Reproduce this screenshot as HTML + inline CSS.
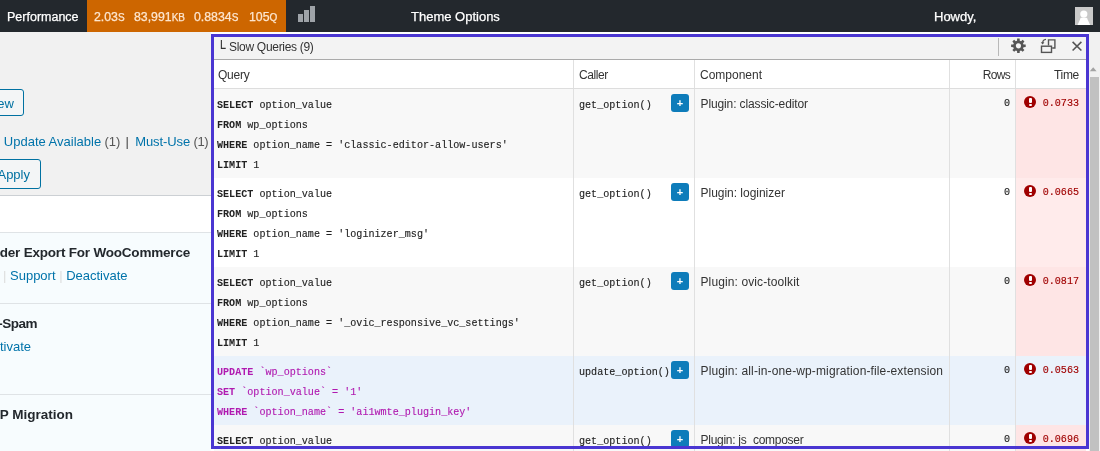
<!DOCTYPE html>
<html><head><meta charset="utf-8"><title>Query Monitor</title>
<style>
*{box-sizing:border-box;margin:0;padding:0}
html,body{width:1100px;height:451px;overflow:hidden;background:#f1f1f1;font-family:"Liberation Sans",sans-serif;}
body{position:relative}
.abs{position:absolute}
#bar{left:0;top:0;width:1100px;height:32px;background:#23282d;color:#fff;font-size:13px}
#bar span{position:absolute;top:1px;line-height:32px;white-space:nowrap;-webkit-text-stroke:0.25px}
#qm{left:87px;top:0;width:199px;height:32px;background:#cd6600}
#qm span{color:#fde6cf;font-size:12.3px}
small{font-size:10px;text-transform:uppercase}
/* left page */
.lnk{color:#0073aa}
.btn{position:absolute;border:1px solid #0071a1;background:#f3f5f6;color:#0071a1;border-radius:3px;font-size:13px}
#tbl{left:-10px;top:195px;width:230px;height:270px;background:#fff;border:1px solid #ccd0d4}
.prow{position:absolute;left:0;width:230px;background:#f7fcfe;border-top:1px solid #dfe3e6}
.ptitle{position:absolute;font-weight:bold;font-size:13.5px;letter-spacing:-0.2px;color:#23282d;white-space:nowrap}
.pact{position:absolute;font-size:13px;color:#0073aa;white-space:nowrap}
/* panel */
#panel{left:211px;top:32px;width:878px;height:419px;background:#fff}
#hl{left:211px;top:34px;width:878px;height:415px;border:3px solid #4a36d2;z-index:10}
#title{left:214px;top:37px;width:872px;height:23px;background:#f3f3f3;border-bottom:1px solid #aaa}
#title .t{position:absolute;left:15px;top:-1px;line-height:22px;font-size:12px;letter-spacing:-0.3px;color:#333}
#thead{left:214px;top:60px;width:872px;height:29px;background:#fff;border-bottom:1px solid #ddd;font-size:12px;color:#333}
#thead span{position:absolute;top:1px;line-height:29px}
.row{position:absolute;left:214px;width:872px}
.odd{background:#f8f8f8}.even{background:#fff}
.cell{position:absolute;top:0;height:100%;border-left:1px solid #e0e0e0}
.mono{font-family:"Liberation Mono",monospace;font-size:10.1px;color:#222;white-space:pre;-webkit-text-stroke:0.12px}
.q{position:absolute;left:3px;top:7px;line-height:20px}
.q b{font-weight:bold;-webkit-text-stroke:0}
.txt{position:absolute;top:5px;line-height:20px;white-space:nowrap}
.plus{position:absolute;left:97px;top:5px;width:18px;height:18px;background:#0e7cba;border-radius:3px}
.plus{color:#fff;font:bold 11px/18px "Liberation Sans",sans-serif;text-align:center;font-style:normal}
.comp{font-size:12px;color:#333}
.time{background:#fee5e5}
.even .time{background:#ffebeb}
.warn{position:absolute;left:8px;top:6.5px;width:12px;height:12px;border-radius:50%;background:#a00000}
.warn:before{content:"";position:absolute;left:4.5px;top:2.2px;width:3px;height:5px;background:#fff;border-radius:1px}
.warn:after{content:"";position:absolute;left:4.5px;top:8px;width:3px;height:2px;background:#fff;border-radius:1px}
.tv{color:#a00000}
.upd{background:#eaf2fb}.upd .time{background:#eaf2fb}
.upd .q{color:#b01ab0}
#sb{left:1089px;top:32px;width:11px;height:419px;background:#f1f1f1}
#sbt{left:1090px;top:77px;width:9px;height:374px;background:#c1c1c1}
#root{position:absolute;left:0;top:0;width:1100px;height:451px;overflow:hidden;will-change:transform}
</style></head><body><div id="root">
<div id="bar" class="abs">
 <span style="left:7px;font-size:12.5px">Performance</span>
 <div id="qm" class="abs"><span style="left:7px">2.03<small>s</small></span><span style="left:47px">83,991<small>kB</small></span><span style="left:107px">0.8834<small>s</small></span><span style="left:162px">105<small>Q</small></span></div>
 <svg class="abs" style="left:298px;top:6px" width="18" height="16"><rect x="0" y="8" width="5" height="8" fill="#9ea3a8"/><rect x="6" y="4" width="5" height="12" fill="#9ea3a8"/><rect x="12" y="0" width="5" height="16" fill="#9ea3a8"/></svg>
 <span style="left:411px">Theme Options</span>
 <span style="left:934px">Howdy,</span>
 <svg class="abs" style="left:1075px;top:7px" width="18" height="18"><rect width="18" height="18" fill="#c9c9c9"/><circle cx="8.8" cy="7" r="3.6" fill="#fff"/><path d="M2.5 18L5.6 11.2C6.6 10.4 11 10.4 12 11.2L15.2 18z" fill="#fff"/></svg>
</div>

<!-- left page content -->
<div class="btn" style="left:-30px;top:89px;width:54px;height:27px;line-height:27px;text-align:right;padding-right:9px">New</div>
<div class="abs" id="subsub" style="left:0;top:133px;font-size:13px;line-height:18px;white-space:nowrap;color:#555">
 <span class="lnk abs" style="left:3.8px">Update Available</span><span class="abs" style="left:104.4px">(1)</span><span class="abs" style="left:125.6px;color:#444">|</span><span class="lnk abs" style="left:135.2px;letter-spacing:-0.1px">Must-Use</span><span class="abs" style="left:193.6px;letter-spacing:-0.45px">(1)</span>
</div>
<div class="btn" style="left:-30px;top:159px;width:71px;height:30px;line-height:30px;text-align:right;padding-right:10px">Apply</div>
<div id="tbl" class="abs">
 <div class="prow" style="top:36px;height:71px"></div>
 <div class="prow" style="top:107px;height:91px"></div>
 <div class="prow" style="top:198px;height:80px"></div>
</div>
<div class="ptitle" style="right:910px;top:245px;line-height:16px">Order Export For WooCommerce</div>
<div class="pact" style="left:3px;top:268px;line-height:16px"><span style="color:#ddd">|</span> Support <span style="color:#ddd">|</span> Deactivate</div>
<div class="ptitle" style="right:1063px;top:316px;line-height:16px;letter-spacing:-0.5px">Anti-Spam</div>
<div class="pact" style="right:1069px;top:339px;line-height:16px">Deactivate</div>
<div class="ptitle" style="right:1027px;top:407px;line-height:16px;letter-spacing:0">WP Migration</div>

<!-- panel -->
<div id="panel" class="abs"></div>
<div id="title" class="abs"><span class="abs" id="corner" style="left:3px;top:3px;font-family:'DejaVu Sans Mono',monospace;font-size:14px;line-height:16px;color:#333">└</span><span class="t">Slow Queries (9)</span>
 <div class="abs" style="left:784px;top:1px;width:1px;height:18px;background:#b8b8b8"></div>
 <svg class="abs" style="left:796px;top:0" width="76" height="22" viewBox="1010 37 76 22">
  <path fill="#555" fill-rule="evenodd" transform="translate(1018.4 45.8)" d="M-1.36 -5.12 L-1.25 -7.29 L1.25 -7.29 L1.36 -5.12 L2.66 -4.59 L4.27 -6.04 L6.04 -4.27 L4.59 -2.66 L5.12 -1.36 L7.29 -1.25 L7.29 1.25 L5.12 1.36 L4.59 2.66 L6.04 4.27 L4.27 6.04 L2.66 4.59 L1.36 5.12 L1.25 7.29 L-1.25 7.29 L-1.36 5.12 L-2.66 4.59 L-4.27 6.04 L-6.04 4.27 L-4.59 2.66 L-5.12 1.36 L-7.29 1.25 L-7.29 -1.25 L-5.12 -1.36 L-4.59 -2.66 L-6.04 -4.27 L-4.27 -6.04 L-2.66 -4.59Z M2.6 0A2.6 2.6 0 1 0 -2.6 0A2.6 2.6 0 1 0 2.6 0Z"/>
  <g fill="none" stroke="#555" stroke-width="1.4">
   <path d="M1048.5 45.5V39.9H1054.9V48H1052.2"/>
   <rect x="1041.5" y="46.2" width="10" height="6.2"/>
   <path d="M1042.6 43.5C1042.6 40.8 1044 39.6 1046 39.4" stroke-width="1.2"/>
  </g>
  <path d="M1040.8 42.2l1.8 2.4l1.8-2.4z" fill="#555"/>
  <path d="M1072.6 41.9l8.8 8.6M1081.4 41.9l-8.8 8.6" stroke="#555" stroke-width="1.6" fill="none"/>
 </svg>

</div>
<div id="thead" class="abs">
 <span style="left:4px;letter-spacing:-0.25px">Query</span>
 <div class="cell" style="left:359px"></div><span style="left:365px;letter-spacing:-0.42px">Caller</span>
 <div class="cell" style="left:480px"></div><span style="left:486px">Component</span>
 <div class="cell" style="left:735px"></div><span style="right:76px;letter-spacing:-0.7px">Rows</span>
 <div class="cell" style="left:801px"></div><span style="right:7px;letter-spacing:-0.3px">Time</span>
</div>
<div class="row odd" style="top:89px;height:89px">
 <div class="q mono"><b>SELECT</b> option_value
<b>FROM</b> wp_options
<b>WHERE</b> option_name = 'classic-editor-allow-users'
<b>LIMIT</b> 1</div>
 <div class="cell" style="left:359px;width:121px"><span class="txt mono" style="left:5px;top:7px">get_option()</span><i class="plus">+</i></div>
 <div class="cell comp" style="left:480px;width:255px"><span class="txt" style="left:5.5px;letter-spacing:-0.12px">Plugin: classic-editor</span></div>
 <div class="cell" style="left:735px;width:66px"><span class="txt mono" style="right:5px">0</span></div>
 <div class="cell time" style="left:801px;width:71px"><i class="warn"></i><span class="txt mono tv" style="right:7px">0.0733</span></div>
</div>
<div class="row even" style="top:178px;height:89px">
 <div class="q mono"><b>SELECT</b> option_value
<b>FROM</b> wp_options
<b>WHERE</b> option_name = 'loginizer_msg'
<b>LIMIT</b> 1</div>
 <div class="cell" style="left:359px;width:121px"><span class="txt mono" style="left:5px;top:7px">get_option()</span><i class="plus">+</i></div>
 <div class="cell comp" style="left:480px;width:255px"><span class="txt" style="left:5.5px;letter-spacing:-0.02px">Plugin: loginizer</span></div>
 <div class="cell" style="left:735px;width:66px"><span class="txt mono" style="right:5px">0</span></div>
 <div class="cell time" style="left:801px;width:71px"><i class="warn"></i><span class="txt mono tv" style="right:7px">0.0665</span></div>
</div>
<div class="row odd" style="top:267px;height:89px">
 <div class="q mono"><b>SELECT</b> option_value
<b>FROM</b> wp_options
<b>WHERE</b> option_name = '_ovic_responsive_vc_settings'
<b>LIMIT</b> 1</div>
 <div class="cell" style="left:359px;width:121px"><span class="txt mono" style="left:5px;top:7px">get_option()</span><i class="plus">+</i></div>
 <div class="cell comp" style="left:480px;width:255px"><span class="txt" style="left:5.5px;letter-spacing:0.11px">Plugin: ovic-toolkit</span></div>
 <div class="cell" style="left:735px;width:66px"><span class="txt mono" style="right:5px">0</span></div>
 <div class="cell time" style="left:801px;width:71px"><i class="warn"></i><span class="txt mono tv" style="right:7px">0.0817</span></div>
</div>
<div class="row upd" style="top:356px;height:69px">
 <div class="q mono"><b>UPDATE</b> `wp_options`
<b>SET</b> `option_value` = '1'
<b>WHERE</b> `option_name` = 'ai1wmte_plugin_key'</div>
 <div class="cell" style="left:359px;width:121px"><span class="txt mono" style="left:5px;top:7px">update_option()</span><i class="plus">+</i></div>
 <div class="cell comp" style="left:480px;width:255px"><span class="txt" style="left:5.5px;letter-spacing:0.125px">Plugin: all-in-one-wp-migration-file-extension</span></div>
 <div class="cell" style="left:735px;width:66px"><span class="txt mono" style="right:5px">0</span></div>
 <div class="cell time" style="left:801px;width:71px"><i class="warn"></i><span class="txt mono tv" style="right:7px">0.0563</span></div>
</div>
<div class="row odd" style="top:425px;height:30px">
 <div class="q mono"><b>SELECT</b> option_value</div>
 <div class="cell" style="left:359px;width:121px"><span class="txt mono" style="left:5px;top:7px">get_option()</span><i class="plus">+</i></div>
 <div class="cell comp" style="left:480px;width:255px"><span class="txt" style="left:5.5px;letter-spacing:-0.27px">Plugin: js_composer</span></div>
 <div class="cell" style="left:735px;width:66px"><span class="txt mono" style="right:5px">0</span></div>
 <div class="cell time" style="left:801px;width:71px"><i class="warn"></i><span class="txt mono tv" style="right:7px">0.0696</span></div>
</div>
<div id="hl" class="abs"></div>
<div id="sb" class="abs"><svg class="abs" style="left:0;top:30px" width="11" height="12"><path d="M0.8 9.2L4.2 5.2L7.6 9.2z" fill="#a3a3a3"/></svg></div><div id="sbt" class="abs"></div>
</div></body></html>
